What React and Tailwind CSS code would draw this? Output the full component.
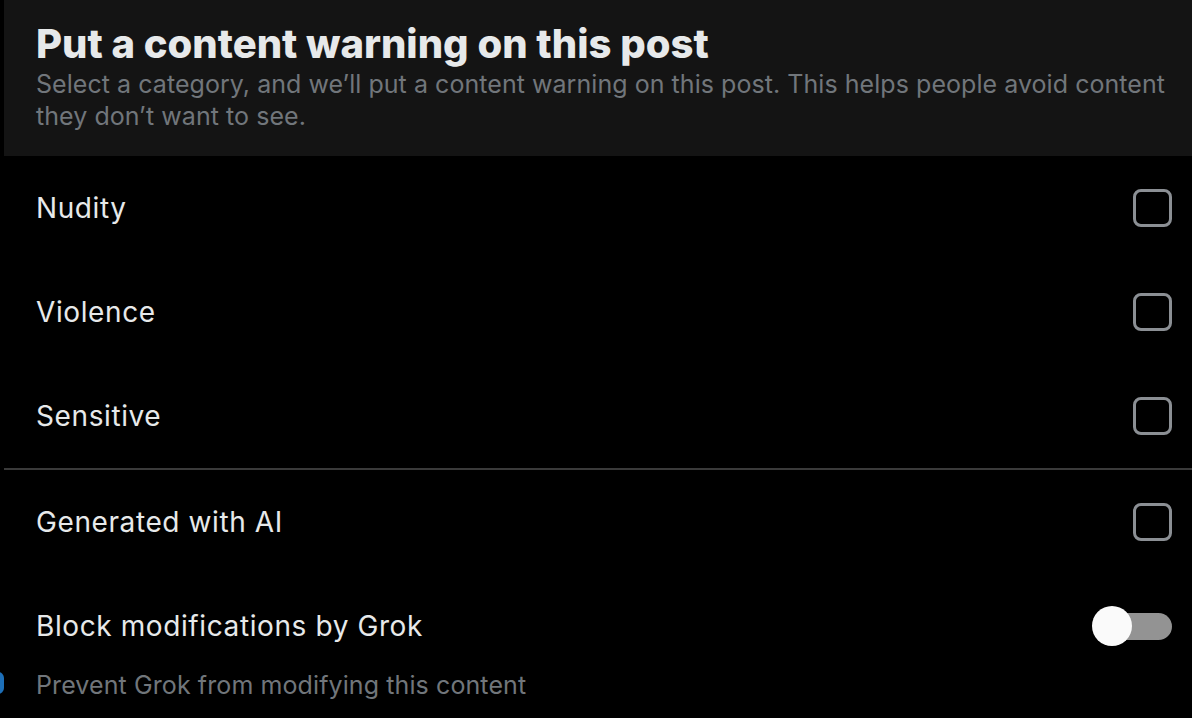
import React from "react";

function Checkbox() {
  return <div className="w-[39px] h-[38px] rounded-[8px] border-[3px] border-[#8b8f94]" />;
}

function Row({ label, children }) {
  return (
    <div className="h-[104px] flex items-center justify-between pl-[36px] pr-[20px]">
      <span className="text-[28px] text-[#e7e9ea] tracking-[0.6px]">{label}</span>
      {children}
    </div>
  );
}

export default function App() {
  return (
    <div className="w-[1192px] h-[718px] bg-black overflow-hidden relative" style={{ fontFamily: "Inter, 'Noto Sans', sans-serif" }}>
      <div className="ml-[4px] h-[156px] bg-[#141414] pl-[32px] pr-[20px] pt-[20px]">
        <h1 className="text-[40px] leading-[48px] font-extrabold text-[#e7e9ea]">Put a content warning on this post</h1>
        <p className="text-[25px] leading-[32px] text-[#71767b] tracking-[0.05px]">
          Select a category, and we’ll put a content warning on this post. This helps people avoid content they don’t want to see.
        </p>
      </div>
      <Row label="Nudity"><Checkbox /></Row>
      <Row label="Violence"><Checkbox /></Row>
      <Row label="Sensitive"><Checkbox /></Row>
      <div className="ml-[4px] h-[2px] bg-[#3a3a3a]" />
      <Row label="Generated with AI"><Checkbox /></Row>
      <div className="pl-[36px] pr-[20px] pt-[31px]">
        <div className="flex items-center justify-between">
          <span className="text-[28px] text-[#e7e9ea] tracking-[0.6px]">Block modifications by Grok</span>
          <div className="relative w-[80px] h-[40px] flex items-center">
            <div className="absolute right-0 w-[60px] h-[27px] rounded-full bg-[#939393]" />
            <div className="absolute left-0 w-[40px] h-[40px] rounded-full bg-[#fafafa]" />
          </div>
        </div>
        <p className="mt-[20px] text-[25px] text-[#71767b] tracking-[0.1px]">Prevent Grok from modifying this content</p>
      </div>
      <div className="absolute left-[-8px] top-[672px] w-[12px] h-[22px] rounded-full bg-[#1d6fb8]" />
    </div>
  );
}
